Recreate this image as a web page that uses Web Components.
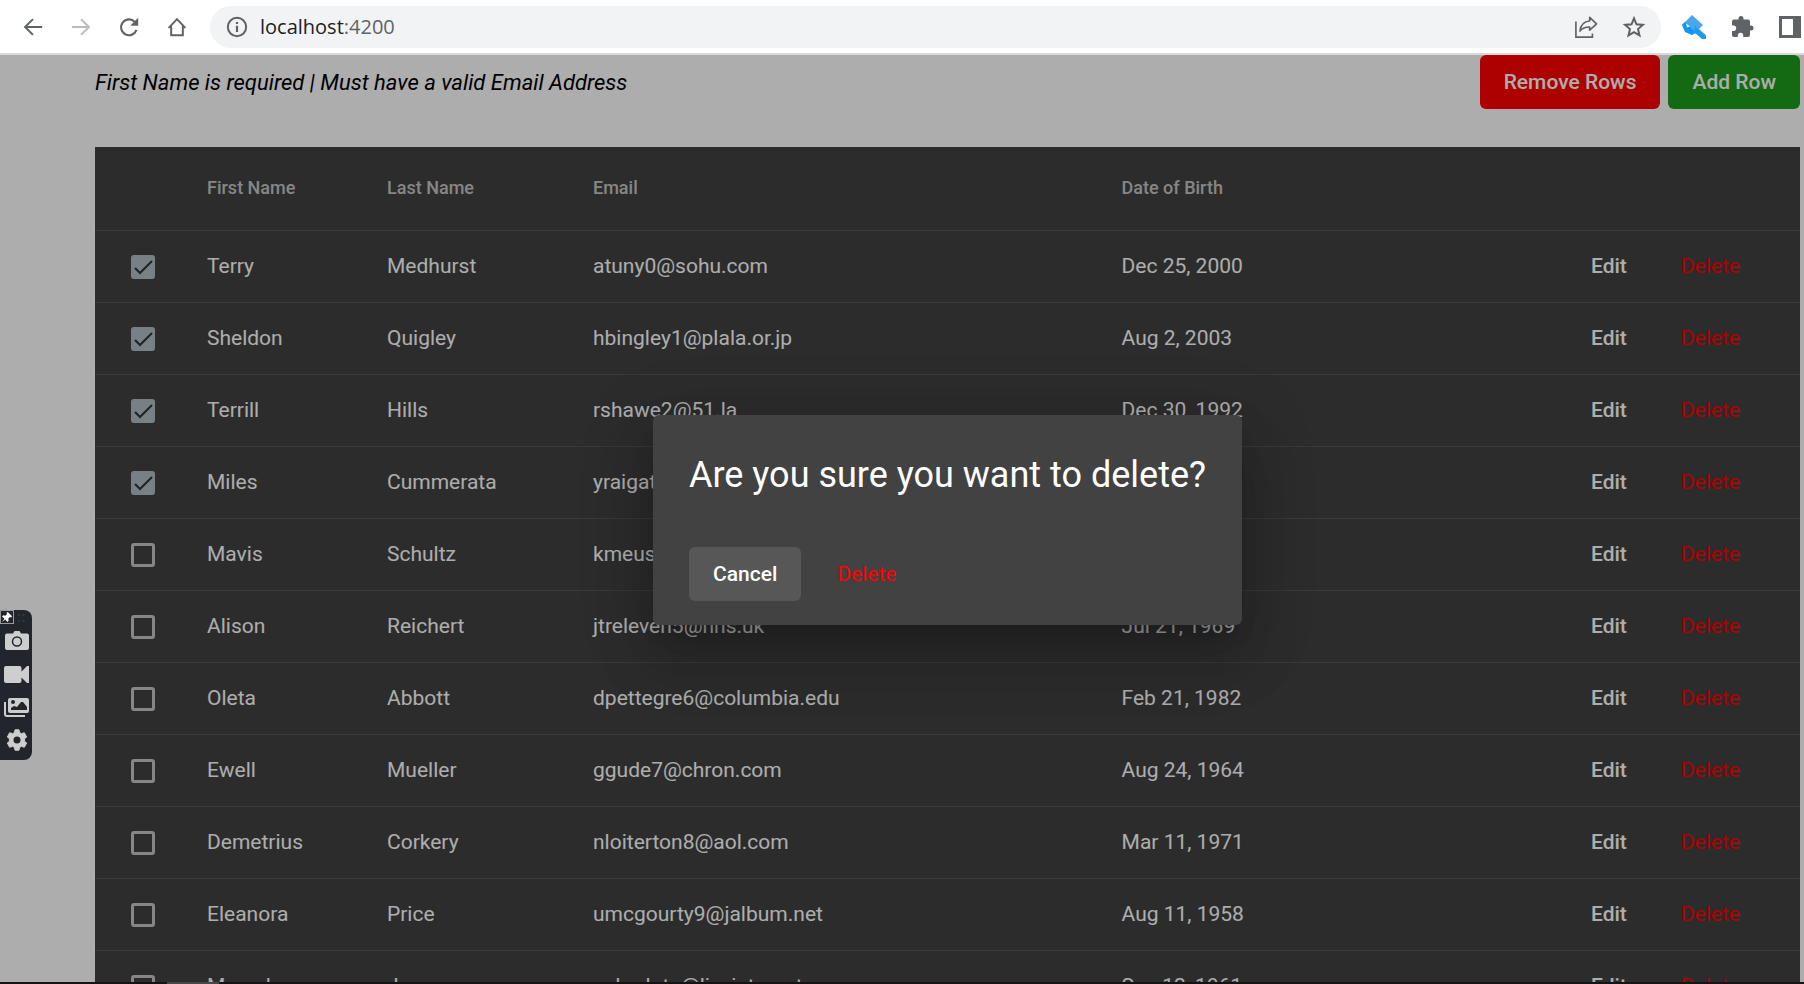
<!DOCTYPE html>
<html lang="en">
<head>
<meta charset="utf-8">
<title>localhost:4200</title>
<style>
html, body { margin: 0; height: 100%; overflow: hidden; font-family: Roboto, sans-serif; font-size: 21px; }
</style>
</head>
<body>
<app-window></app-window>
<script>
const icons = {
  back: '<path d="M23 12H3M12 2.500L2.500 12l9.500 9.500" fill="none" stroke="currentColor" stroke-width="2.400"/>',
  forward: '<path d="M1 12h20M12 2.500l9.500 9.500-9.500 9.500" fill="none" stroke="currentColor" stroke-width="2.400"/>',
  reload: '<path d="M21 15.500a9.500 9.500 0 1 1-1.900-9.500" fill="none" stroke="currentColor" stroke-width="2.500"/><path d="M23 1v9.500h-9.500z" fill="currentColor"/>',
  home: '<path d="M2 13L12 2.500 22 13M5 11v11h14V11" fill="none" stroke="currentColor" stroke-width="2.400"/>',
  info: '<circle cx="12" cy="12" r="10" fill="none" stroke="currentColor" stroke-width="2.200"/><path d="M12 10.500V17.500M12 6.500v2.300" stroke="currentColor" stroke-width="2.400"/>',
  share: '<path d="M1 6v17h18v-4" fill="none" stroke="currentColor" stroke-width="1.800"/><path d="M16 1.500l7.500 7-7.500 7V12c-5 0-8 1-10.500 4.500C6 10 10 6 16 5.500z" fill="none" stroke="currentColor" stroke-width="1.800" stroke-linejoin="round"/>',
  star: '<path d="M12 2.500l2.700 6.600 7 .6-5.300 4.600 1.600 6.900-6-3.600-6 3.600 1.600-6.900-5.300-4.600 7-.6z" fill="none" stroke="currentColor" stroke-width="2.200"/>',
  key: '<path d="M0 10L10 0l11 10-4 4 7 6v4h-4l-1-3-3-1-3-2-3 2-7-6z" fill="#4aa8e8"/><path d="M0 10l3-3 13 13-3-2-3 2-7-3z" fill="#0f96f5"/><path d="M13 11l11 11v2h-4l-8-7z" fill="#2196ee"/><path d="M4 8.500l4 3-3 .8z" fill="#fff"/>',
  puzzle: '<path d="M20 10.500h-1V6.500a2 2 0 0 0-2-2h-4.500V3.500a2.500 2.500 0 0 0-5 0v1H3a2 2 0 0 0-2 2v4h1.500a2.700 2.700 0 0 1 0 5.400H1V20a2 2 0 0 0 2 2h3.800v-1.500a2.700 2.700 0 0 1 5.400 0V22H17a2 2 0 0 0 2-2v-4.500h1a2.500 2.500 0 0 0 0-5z" fill="currentColor"/>',
  panel: '<path d="M-1 1h22v22H-1z" fill="currentColor"/><path d="M2 4h11v16H2z" fill="#fff"/>',
  camera: '<path d="M8 4.500L9.500 2h5L16 4.500h6a2 2 0 0 1 2 2V19a2 2 0 0 1-2 2H2a2 2 0 0 1-2-2V6.500a2 2 0 0 1 2-2z" fill="currentColor"/><circle cx="12" cy="12.500" r="4.500" fill="none" stroke="#22252c" stroke-width="1.500"/>',
  video: '<path d="M1 4h13.500a2 2 0 0 1 2 2v3.500L22 4h2v17h-2l-5.500-5.500V19a2 2 0 0 1-2 2H1a2 2 0 0 1-2-2V6a2 2 0 0 1 2-2z" fill="currentColor"/>',
  images: '<path d="M5 3h17a2 2 0 0 1 2 2v11a2 2 0 0 1-2 2H5a2 2 0 0 1-2-2V5a2 2 0 0 1 2-2z" fill="currentColor"/><path d="M0 7v12a2 2 0 0 0 2 2h18" fill="none" stroke="currentColor" stroke-width="2"/><circle cx="8" cy="7" r="2" fill="#22252c"/><path d="M6 15v-2l3-2 3 1 4-5h2l4 5v3z" fill="#22252c"/>',
  gear: '<path fill="currentColor" stroke="currentColor" stroke-width="1" stroke-linejoin="round" d="M19.500 13.200c.1-.8.1-1.600 0-2.400l2.200-1.800-2.400-4.300-2.800 1a9 9 0 0 0-2-1.200L14 1.800h-4l-.5 2.700a9 9 0 0 0-2 1.200l-2.800-1L2.300 9l2.200 1.800a9 9 0 0 0 0 2.400L2.300 15l2.400 4.300 2.800-1a9 9 0 0 0 2 1.200l.5 2.700h4l.5-2.700a9 9 0 0 0 2-1.200l2.800 1 2.400-4.300z"/><circle cx="12" cy="12" r="3.500" fill="#22252c"/>',
  pin: '<path d="M14 0l10 10-2 3-3-1-4 4 1 5-3 3-5-6-8 6 6-8-6-5 3-3 5 1 4-4-1-3z" fill="#fff"/>',
  grip: '<g fill="#3b3e45"><circle cx="8" cy="8" r="2"/><circle cx="17" cy="8" r="2"/><circle cx="8" cy="20" r="2"/><circle cx="17" cy="20" r="2"/></g>'
};

function define(name, html, setup) {
  const template = document.createElement('template');
  template.innerHTML = html;
  customElements.define(name, class extends HTMLElement {
    constructor() {
      super();
      this.attachShadow({ mode: 'open' }).append(template.content.cloneNode(true));
    }
    connectedCallback() { if (setup) setup(this, this.shadowRoot); }
  });
}

define('ui-icon', `
<style>
:host { display: block; width: 24px; height: 24px; flex: none; }
svg { display: block; width: 100%; height: 100%; overflow: visible; }
</style><svg viewBox="0 0 24 24" aria-hidden="true"></svg>`,
(el, root) => { root.querySelector('svg').innerHTML = icons[el.getAttribute('name')]; });

define('app-button', `
<style>
:host { display: inline-block; }
button { display: block; height: 54px; padding: 0 24px; border: 0; border-radius: 6px; font: 500 21px/54px Roboto, sans-serif;
  color: var(--fg, #fff); background: var(--bg, transparent); white-space: nowrap; cursor: pointer; }
:host([kind="remove"]) { --bg: #f00; }
:host([kind="add"]) { --bg: #1c9c1c; }
:host([kind="danger"]) { --fg: #f00; }
:host([kind="tonal"]) { --bg: #575757; }
:host([kind="danger"]) button { font-weight: 400; }
</style><button type="button"><slot></slot></button>`);

define('browser-bar', `
<style>
:host { display: flex; align-items: center; box-sizing: border-box; height: 55px; flex: none; background: #fff; color: #5f6368;
  border-bottom: 2px solid #d9d9d9; overflow: hidden; }
button { border: 0; padding: 0; background: none; color: inherit; display: block; flex: none; }
button:disabled { color: #babcbe; }
.nav { display: flex; gap: 26px; padding: 0 22px; }
.nav ui-icon, .address ui-icon { width: 22px; height: 22px; }
.nav ui-icon { width: 20px; height: 20px; padding: 1px; }
.address { flex: 1; display: flex; align-items: center; height: 42px; border-radius: 21px; background: #f1f3f4; padding: 0 16px; gap: 12px; min-width: 0; }
.address .star { margin-left: 14px; }
.url { flex: 1; font: 20px/42px "Open Sans", sans-serif; color: #5f6368; }
.url a { color: inherit; text-decoration: none; }
.url b { font-weight: 400; color: #202124; }
.tools { display: flex; gap: 25px; padding-left: 21px; }
</style>
<nav class="nav">
<button aria-label="Back"><ui-icon name="back"></ui-icon></button>
<button aria-label="Forward" disabled><ui-icon name="forward"></ui-icon></button>
<button aria-label="Reload"><ui-icon name="reload"></ui-icon></button>
<button aria-label="Home"><ui-icon name="home"></ui-icon></button>
</nav>
<div class="address"><ui-icon name="info"></ui-icon><span class="url"><a href="#"><b>localhost</b>:4200</a></span>
<button aria-label="Share"><ui-icon name="share"></ui-icon></button>
<button class="star" aria-label="Bookmark"><ui-icon name="star"></ui-icon></button></div>
<div class="tools">
<button aria-label="Password key"><ui-icon name="key"></ui-icon></button>
<button aria-label="Extensions"><ui-icon name="puzzle"></ui-icon></button>
<button aria-label="Side panel"><ui-icon name="panel"></ui-icon></button>
</div>`);

const people = [
  ['Terry', 'Medhurst', 'atuny0@sohu.com', 'Dec 25, 2000', true],
  ['Sheldon', 'Quigley', 'hbingley1@plala.or.jp', 'Aug 2, 2003', true],
  ['Terrill', 'Hills', 'rshawe2@51.la', 'Dec 30, 1992', true],
  ['Miles', 'Cummerata', 'yraigatt3@nature.com', 'Jan 16, 1969', true],
  ['Mavis', 'Schultz', 'kmeus4@upenn.edu', 'Nov 4, 1968'],
  ['Alison', 'Reichert', 'jtreleven5@nhs.uk', 'Jul 21, 1969'],
  ['Oleta', 'Abbott', 'dpettegre6@columbia.edu', 'Feb 21, 1982'],
  ['Ewell', 'Mueller', 'ggude7@chron.com', 'Aug 24, 1964'],
  ['Demetrius', 'Corkery', 'nloiterton8@aol.com', 'Mar 11, 1971'],
  ['Eleanora', 'Price', 'umcgourty9@jalbum.net', 'Aug 11, 1958'],
  ['Marcel', 'Jones', 'acharlota@liveinternet.ru', 'Sep 12, 1961']
];

define('people-table', `
<style>
:host { display: block; background: #424242; color: #fff; }
table { width: 100%; table-layout: fixed; border-collapse: separate; border-spacing: 0; }
th, td { box-sizing: border-box; height: 72px; padding: 0 0 2px; border-bottom: 1px solid #555; text-align: left; font-size: 21px; line-height: 24px; font-weight: 400; white-space: nowrap; }
th { height: 84px; font-size: 18px; font-weight: 500; color: #c6c6c6; }
.pick { width: 112px; } .first { width: 180px; } .last { width: 206px; } .mail { width: 31%; } .actions { width: 234px; }
td:first-child { padding: 0 0 0 36px; }
input { appearance: none; display: block; box-sizing: border-box; width: 24px; height: 24px; margin: 0; border: 3px solid #c6c6c6; border-radius: 3px; }
input:checked { border: 0; background: #b0bec5 no-repeat center/24px url("data:image/svg+xml,%3Csvg xmlns='http://www.w3.org/2000/svg' viewBox='0 0 24 24'%3E%3Cpath d='M4 13l5 5L21 6' fill='none' stroke='%23333' stroke-width='2'/%3E%3C/svg%3E"); }
td.row-actions > div { display: flex; gap: 6px; justify-content: flex-end; padding-right: 36px; }
</style>
<table><thead><tr><th class="pick"></th><th class="first">First Name</th><th class="last">Last Name</th><th class="mail">Email</th><th>Date of Birth</th><th class="actions"></th></tr></thead><tbody></tbody></table>`,
(el, root) => {
  root.querySelector('tbody').innerHTML = people.map(([first, last, mail, born, picked]) => `
<tr><td><input type="checkbox" aria-label="Select ${first} ${last}"${picked ? ' checked' : ''}></td>
<td>${first}</td><td>${last}</td><td>${mail}</td><td>${born}</td>
<td class="row-actions"><div><app-button>Edit</app-button><app-button kind="danger">Delete</app-button></div></td></tr>`).join('');
});

define('confirm-dialog', `
<style>
:host { position: absolute; inset: 0 0 -2px; display: flex; align-items: center; justify-content: center; padding: 0 4px 0 95px; background: rgba(0,0,0,.32); }
section { box-sizing: border-box; padding: 36px 36px 24px; border-radius: 6px; background: #424242; color: #fff;
  box-shadow: 0 16px 22px -10px rgba(0,0,0,.2), 0 36px 57px 4px rgba(0,0,0,.14), 0 14px 69px 12px rgba(0,0,0,.12); }
h1 { margin: 0 0 48px; font-size: 36px; line-height: 48px; font-weight: 400; }
div { display: flex; gap: 12px; }
</style>
<section role="dialog" aria-modal="true" aria-labelledby="title"><h1 id="title"><slot></slot></h1>
<div><app-button kind="tonal">Cancel</app-button><app-button kind="danger">Delete</app-button></div></section>`);

define('capture-bar', `
<style>
:host { position: absolute; left: 0; top: 555px; width: 32px; height: 150px; box-sizing: border-box; background: #22252c; border-radius: 0 8px 8px 0; color: #cecece; }
button { display: block; border: 0; padding: 0; background: none; color: inherit; }
.top { display: flex; align-items: center; gap: 1px; }
.top > ui-icon { width: 12px; height: 12px; }
.pin { width: 14px; height: 14px; box-sizing: border-box; border: 1px solid #999; padding: 1px; }
.pin ui-icon { width: 10px; height: 10px; }
.tools { display: flex; flex-direction: column; gap: 9px; padding: 5px; }
.tools ui-icon { width: 24px; height: 24px; }
</style>
<div class="top"><button class="pin" aria-label="Pin"><ui-icon name="pin"></ui-icon></button><ui-icon name="grip"></ui-icon></div>
<div class="tools">
<button aria-label="Take screenshot"><ui-icon name="camera"></ui-icon></button>
<button aria-label="Record video"><ui-icon name="video"></ui-icon></button>
<button aria-label="Gallery"><ui-icon name="images"></ui-icon></button>
<button aria-label="Settings"><ui-icon name="gear"></ui-icon></button>
</div>`);

define('app-window', `
<style>
:host { display: flex; flex-direction: column; height: 100vh; }
main { position: relative; flex: 1; min-height: 0; overflow: hidden; background: #fff; }
.page { padding: 0 4px 0 95px; }
header { display: flex; align-items: center; gap: 8px; height: 54px; margin-bottom: 38px; }
header em { flex: 1; font-size: 22px; color: #000; }
footer { flex: none; height: 2px; background: #161216; padding-left: 167px; }
footer span { display: block; width: 52px; height: 2px; background: #4a4749; }
</style>
<browser-bar></browser-bar>
<main>
<div class="page">
<header><em>First Name is required | Must have a valid Email Address</em><app-button kind="remove">Remove Rows</app-button><app-button kind="add">Add Row</app-button></header>
<people-table></people-table>
</div>
<confirm-dialog>Are you sure you want to delete?</confirm-dialog>
<capture-bar></capture-bar>
</main>
<footer><span></span></footer>`);
</script>
</body>
</html>
